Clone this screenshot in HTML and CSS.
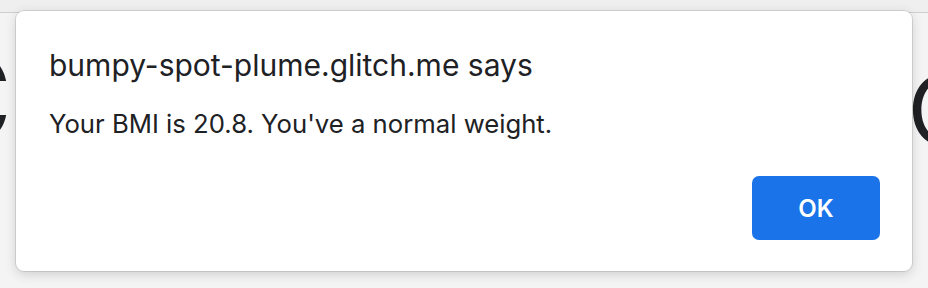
FILE: index.html
```html
<!DOCTYPE html>
<html>
<head>
<meta charset="utf-8">
<link rel="stylesheet" href="styles.css">
</head>
<body>
<div class="screen">
  <div class="tabstrip"></div>
  <div class="page">
    <span class="bg-letter bg-left">C</span>
    <span class="bg-letter bg-right">o</span>
  </div>
  <div class="dialog" role="alertdialog">
    <div class="title">bumpy-spot-plume.glitch.me says</div>
    <div class="message">Your BMI is 20.8. You've a normal weight.</div>
    <div class="actions">
      <button class="ok">OK</button>
    </div>
  </div>
</div>
</body>
</html>
```
FILE: styles.css
```css
html, body {
  margin: 0;
  padding: 0;
}
body {
  width: 928px;
  height: 288px;
  overflow: hidden;
  font-family: Inter, "Liberation Sans", sans-serif;
  background: #f3f3f3;
}
.screen {
  position: relative;
  width: 928px;
  height: 288px;
  overflow: hidden;
  background: #f3f3f3;
}
.tabstrip {
  height: 12px;
  background: #efefef;
  border-bottom: 1px solid #cfcfcf;
}
.page {
  position: relative;
  height: 275px;
  background: #f4f4f4;
}
.bg-letter {
  position: absolute;
  top: 22px;
  font-family: Inter, sans-serif;
  font-weight: 300;
  font-size: 126px;
  line-height: 126px;
  color: #202124;
}
.bg-left {
  left: -78px;
}
.bg-right {
  left: 906px;
}
.dialog {
  position: absolute;
  left: 16px;
  top: 11px;
  width: 896px;
  height: 260px;
  box-sizing: border-box;
  background: #ffffff;
  border-radius: 8px;
  box-shadow: 0 0 0 1px rgba(0,0,0,0.10), 0 3px 12px rgba(0,0,0,0.16);
  padding: 36px 32px 31px 33px;
  display: flex;
  flex-direction: column;
  color: #202124;
}
.title {
  font-size: 30px;
  line-height: 36px;
  font-weight: 400;
}
.message {
  margin-top: 26px;
  font-size: 25.7px;
  line-height: 30px;
}
.actions {
  margin-top: auto;
  display: flex;
  justify-content: flex-end;
}
.ok {
  width: 128px;
  height: 64px;
  border: none;
  border-radius: 7px;
  background: #1a73e8;
  color: #ffffff;
  font-family: Inter, "Liberation Sans", sans-serif;
  font-size: 24px;
  font-weight: 600;
  padding: 0;
}
```
